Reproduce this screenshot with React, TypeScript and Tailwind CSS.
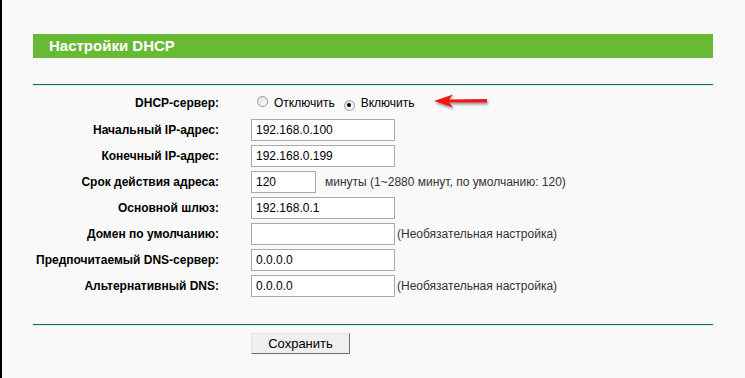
import React from "react";

const Radio = ({ checked }: { checked?: boolean }) => (
  <span className="relative inline-flex w-[11px] h-[11px] rounded-full border border-[#9a9a9a] bg-gradient-to-br from-[#dcdcdc] to-white items-center justify-center">
    {checked && <span className="w-[4px] h-[4px] rounded-full bg-black" />}
  </span>
);

const Input = ({ value, w = "w-[144px]" }: { value: string; w?: string }) => (
  <div className={`${w} h-[22px] border border-[#a9a9a9] bg-white pl-[4px] flex items-center text-[12px] text-black`}>
    {value}
  </div>
);

const Row = ({ label, children, h = "h-[26px]" }: { label: string; children: React.ReactNode; h?: string }) => (
  <div className={`flex items-center ${h}`}>
    <div className="w-[186px] text-right font-bold text-[12px] text-black">{label}</div>
    <div className="ml-[32px] flex items-center">{children}</div>
  </div>
);

export default function App() {
  return (
    <div
      className="w-[745px] h-[378px] bg-[#f9f9f9] border-l-2 border-black pl-[31px] pt-[34px]"
      style={{ fontFamily: '"Liberation Sans", Arial, sans-serif' }}
    >
      <div className="w-[680px] h-[24px] bg-[#68b934] flex items-center pl-[16px] text-white font-bold text-[15px]">
        Настройки DHCP
      </div>
      <div className="w-[680px] mt-[26px] h-[2px] bg-[#0d703c] border-b border-[#e4ece6]" />
      <div className="w-[680px] pt-[3px]">
        <Row label="DHCP-сервер:" h="h-[28px]">
          <div className="flex items-center text-[12px] text-black">
            <span className="ml-[6px]"><Radio /></span>
            <span className="ml-[6px]">Отключить</span>
            <span className="ml-[9px]"><Radio checked /></span>
            <span className="ml-[6px]">Включить</span>
            <svg className="ml-[18px] -mt-[2px]" width="60" height="18" viewBox="0 0 60 18">
              <defs>
                <filter id="sh" x="-20%" y="-50%" width="140%" height="200%">
                  <feDropShadow dx="1" dy="2" stdDeviation="1.3" floodColor="#000" floodOpacity="0.4" />
                </filter>
              </defs>
              <g filter="url(#sh)">
                <polygon points="1,8 20,1.5 16,6.5 54,6 54,9.5 16,9.5 20,14.5" fill="#f21414" />
              </g>
            </svg>
          </div>
        </Row>
        <Row label="Начальный IP-адрес:"><Input value="192.168.0.100" /></Row>
        <Row label="Конечный IP-адрес:"><Input value="192.168.0.199" /></Row>
        <Row label="Срок действия адреса:">
          <Input value="120" w="w-[65px]" />
          <span className="ml-[9px] text-[12px] text-[#333]">минуты (1~2880 минут, по умолчанию: 120)</span>
        </Row>
        <Row label="Основной шлюз:"><Input value="192.168.0.1" /></Row>
        <Row label="Домен по умолчанию:">
          <Input value="" />
          <span className="ml-[2px] text-[12px] text-[#333]">(Необязательная настройка)</span>
        </Row>
        <Row label="Предпочитаемый DNS-сервер:"><Input value="0.0.0.0" /></Row>
        <Row label="Альтернативный DNS:">
          <Input value="0.0.0.0" />
          <span className="ml-[2px] text-[12px] text-[#333]">(Необязательная настройка)</span>
        </Row>
      </div>
      <div className="w-[680px] mt-[25px] h-[2px] bg-[#0d703c] border-b border-[#e4ece6]" />
      <div className="ml-[218px] mt-[7px]">
        <button className="w-[99px] h-[21px] bg-[#efefef] border border-t-[#e3e3e3] border-l-[#e3e3e3] border-r-[#707070] border-b-[#707070] text-[13px] text-black flex items-center justify-center">
          Сохранить
        </button>
      </div>
    </div>
  );
}
